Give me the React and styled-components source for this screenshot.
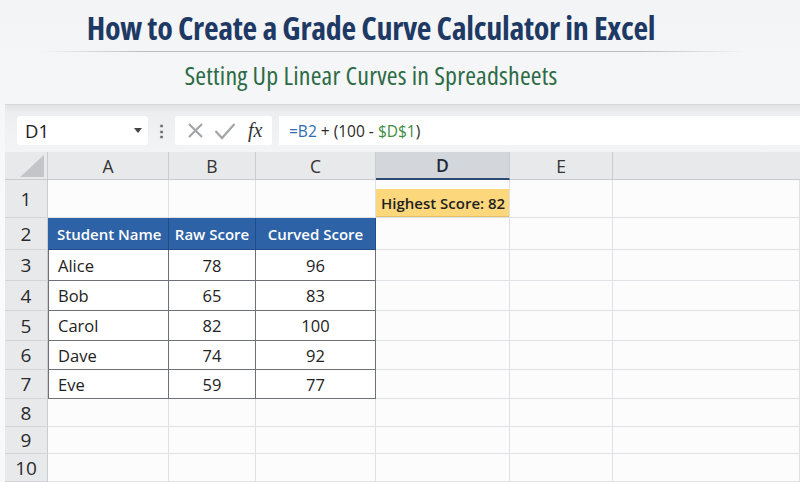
import styled, { createGlobalStyle } from 'styled-components';

const GlobalStyle = createGlobalStyle`
  html, body {
    margin: 0;
    padding: 0;
    background: #f7f8f9;
    font-family: 'Open Sans', 'Noto Sans', sans-serif;
  }
`;

const COLS = ['A', 'B', 'C', 'D', 'E', ''];

const students = [
    { name: 'Alice', raw: 78, curved: 96 },
    { name: 'Bob', raw: 65, curved: 83 },
    { name: 'Carol', raw: 82, curved: 100 },
    { name: 'Dave', raw: 74, curved: 92 },
    { name: 'Eve', raw: 59, curved: 77 },
];

export default function App() {
    return (
        <Page>
            <GlobalStyle />
            <Header>
                <Title>How to Create a Grade Curve Calculator in Excel</Title>
                <Divider />
                <Subtitle>Setting Up Linear Curves in Spreadsheets</Subtitle>
            </Header>

            <Workbook>
                <FormulaBar>
                    <NameBox>
                        D1
                        <Caret />
                    </NameBox>
                    <Grip>⋮</Grip>
                    <IconBox>
                        <svg width="17" height="17" viewBox="0 0 17 17">
                            <path d="M2 2 L15 15 M15 2 L2 15" stroke="#a3a5a8" strokeWidth="2.2" fill="none" />
                        </svg>
                        <svg width="22" height="18" viewBox="0 0 22 18">
                            <path d="M1.5 9 L8 16 L20.5 2" stroke="#a3a5a8" strokeWidth="2.2" fill="none" />
                        </svg>
                        <Fx>fx</Fx>
                    </IconBox>
                    <FormulaInput>
                        <Ref $color="#2f6db3">=B2</Ref>&nbsp;+ (100 -&nbsp;<Ref $color="#3c8d3f">$D$1</Ref>)
                    </FormulaInput>
                </FormulaBar>

                <Grid>
                    <Corner>
                        <svg width="24" height="22" viewBox="0 0 24 22">
                            <path d="M24 0 L24 22 L0 22 Z" fill="#c3c5c8" />
                        </svg>
                    </Corner>
                    {COLS.map((c, i) => (
                        <ColHead key={i} $active={c === 'D'} $last={i === COLS.length - 1}>{c}</ColHead>
                    ))}

                    <RowHead>1</RowHead>
                    <Cell />
                    <Cell />
                    <Cell />
                    <Cell $flush>
                        <Highlight>Highest Score: 82</Highlight>
                    </Cell>
                    <Cell />
                    <Cell />

                    <RowHead>2</RowHead>
                    <HeadCell $align="left">Student Name</HeadCell>
                    <HeadCell>Raw Score</HeadCell>
                    <HeadCell>Curved Score</HeadCell>
                    <Cell />
                    <Cell />
                    <Cell />

                    {students.map((s, i) => (
                        <Row key={s.name}>
                            <RowHead>{i + 3}</RowHead>
                            <DataCell $align="left">{s.name}</DataCell>
                            <DataCell>{s.raw}</DataCell>
                            <DataCell>{s.curved}</DataCell>
                            <Cell />
                            <Cell />
                            <Cell />
                        </Row>
                    ))}

                    {[8, 9, 10].map((n) => (
                        <Row key={n}>
                            <RowHead>{n}</RowHead>
                            {COLS.map((c, i) => <Cell key={i} />)}
                        </Row>
                    ))}
                </Grid>
            </Workbook>
        </Page>
    );
}

const Row = ({ children }) => <>{children}</>;

const Page = styled.div`
  width: 800px;
  height: 482px;
  overflow: hidden;
  display: flex;
  flex-direction: column;
  background: linear-gradient(180deg, #f3f4f6 0%, #fbfbfc 60%, #f7f8f9 100%);
`;

const Header = styled.header`
  height: 104px;
  display: flex;
  flex-direction: column;
  align-items: center;
  box-sizing: border-box;
  padding-top: 8px;
`;

const Title = styled.h1`
  margin: 0 58px 0 0;
  font-family: 'Open Sans', sans-serif;
  font-stretch: 75%;
  font-size: 32px;
  line-height: 40px;
  font-weight: 700;
  color: #1e3a64;
  letter-spacing: -0.3px;
`;

const Divider = styled.div`
  width: 705px;
  height: 1px;
  margin: 3px 16px 0 0;
  background: linear-gradient(90deg, rgba(180,184,190,0) 0%, #b9bcc1 15%, #b9bcc1 85%, rgba(180,184,190,0) 100%);
`;

const Subtitle = styled.h2`
  margin: 8px 58px 0 0;
  font-family: 'Open Sans', sans-serif;
  font-stretch: 75%;
  font-size: 26px;
  line-height: 30px;
  font-weight: 400;
  letter-spacing: 0.2px;
  color: #2c6b45;
`;

const Workbook = styled.section`
  flex: 1;
  margin-left: 5px;
  display: flex;
  flex-direction: column;
  background: #f5f6f7;
  border-top: 1px solid #d6d8db;
`;

const FormulaBar = styled.div`
  height: 47px;
  box-sizing: border-box;
  padding: 11px 0 7px 12px;
  display: flex;
  align-items: stretch;
  background: linear-gradient(180deg, #e1e3e5 0px, #eceef0 8px, #f3f4f5 100%);
`;

const NameBox = styled.div`
  width: 131px;
  box-sizing: border-box;
  background: #fff;
  border-radius: 3px;
  display: flex;
  align-items: center;
  justify-content: space-between;
  padding: 0 6px 0 8px;
  font-size: 18.5px;
  color: #222;
`;

const Caret = styled.span`
  width: 0;
  height: 0;
  border-left: 4px solid transparent;
  border-right: 4px solid transparent;
  border-top: 5px solid #444;
`;

const Grip = styled.span`
  width: 27px;
  display: flex;
  align-items: center;
  justify-content: center;
  color: #666;
  font-size: 17px;
  font-weight: 700;
`;

const IconBox = styled.div`
  width: 97px;
  box-sizing: border-box;
  background: #fff;
  border-radius: 2px;
  display: flex;
  align-items: center;
  gap: 10px;
  padding-left: 12px;
`;

const Fx = styled.span`
  font-family: 'Liberation Serif', 'DejaVu Serif', serif;
  font-style: italic;
  font-size: 20px;
  color: #333;
  margin-left: 2px;
`;

const FormulaInput = styled.div`
  flex: 1;
  margin-left: 7px;
  background: #fff;
  display: flex;
  align-items: center;
  padding-left: 10px;
  font-size: 15.5px;
  color: #2a2a2a;
`;

const Ref = styled.span`
  color: ${(p) => p.$color};
`;

const Grid = styled.div`
  flex: 1;
  display: grid;
  grid-template-columns: 43px 121px 87px 120px 134px 103px 1fr;
  grid-template-rows: 28px 38px 32px 31px 30px 30px 29px 29px 28px 27px 28px;
  background: #fcfcfd;
`;

const Corner = styled.div`
  background: #e8e9ea;
  display: flex;
  align-items: flex-end;
  justify-content: flex-end;
  padding: 0 3px 2px 0;
  border-right: 1px solid #c9cbce;
  border-bottom: 1px solid #c9cbce;
`;

const ColHead = styled.div`
  display: flex;
  align-items: center;
  justify-content: center;
  font-size: 17.5px;
  color: ${(p) => (p.$active ? '#1d2a3a' : '#333')};
  font-weight: ${(p) => (p.$active ? 600 : 400)};
  background: ${(p) => (p.$active ? '#d3d6da' : '#e8e9ea')};
  border-right: ${(p) => (p.$last ? 'none' : '1px solid #c9cbce')};
  border-bottom: ${(p) => (p.$active ? '2px solid #2c4a76' : '1px solid #c9cbce')};
`;

const RowHead = styled.div`
  display: flex;
  align-items: center;
  justify-content: center;
  font-size: 19px;
  color: #2a2a2a;
  background: #e8e9ea;
  border-bottom: 1px solid #d3d5d8;
  border-right: 1px solid #c9cbce;
`;

const Cell = styled.div`
  border-right: 1px solid #dfe1e4;
  border-bottom: 1px solid #dfe1e4;
  display: flex;
  align-items: flex-end;
  padding-top: ${(p) => (p.$flush ? '9px' : 0)};
`;

const Highlight = styled.div`
  flex: 1;
  align-self: stretch;
  display: flex;
  align-items: center;
  padding-left: 5px;
  white-space: nowrap;
  background: #fcd77c;
  border-bottom: 1px solid #e6c067;
  font-size: 15px;
  font-weight: 600;
  color: #1f1f1f;
`;

const HeadCell = styled.div`
  display: flex;
  align-items: center;
  justify-content: ${(p) => (p.$align === 'left' ? 'flex-start' : 'center')};
  padding-left: ${(p) => (p.$align === 'left' ? '9px' : 0)};
  white-space: nowrap;
  background: #2d62a7;
  color: #fff;
  font-size: 15px;
  font-weight: 600;
  border-right: 1px solid #214d86;
  border-bottom: 1px solid #214d86;
`;

const DataCell = styled.div`
  display: flex;
  align-items: center;
  justify-content: ${(p) => (p.$align === 'left' ? 'flex-start' : 'center')};
  padding-left: ${(p) => (p.$align === 'left' ? '9px' : 0)};
  white-space: nowrap;
  background: #fff;
  color: #222;
  font-size: 16.5px;
  border-right: 1px solid #6d7177;
  border-bottom: 1px solid #6d7177;
  &:nth-child(7n + 2) {
    border-left: 1px solid #6d7177;
  }
`;
